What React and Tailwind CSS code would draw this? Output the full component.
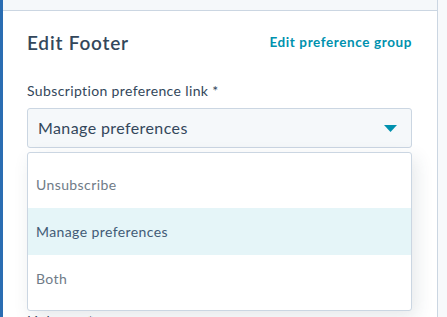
import React from "react";

const options = ["Unsubscribe", "Manage preferences", "Both"];

export default function App() {
    const selected = "Manage preferences";

    return (
        <div className="w-[447px] h-[317px] flex bg-white overflow-hidden font-['Lato',sans-serif]">
            <div className="w-[3px] shrink-0 bg-[#2a6db2]" />

            <div className="w-[435px] shrink-0 flex flex-col border-r border-[#cbd6e2]">
                <div className="h-[11px] shrink-0 bg-[#f5f8fa] border-b border-[#cbd6e2]" />

                <div className="pl-[24px] pr-[25px] pt-[20px]">
                    <div className="flex items-center justify-between h-[24px]">
                        <div className="text-[19px] font-semibold text-[#33475b] tracking-[0.8px]">Edit Footer</div>
                        <div className="text-[13.5px] font-bold text-[#0091ae] tracking-[0.6px] -mt-[1px]">Edit preference group</div>
                    </div>

                    <div className="relative mt-[26px]">
                        <div className="text-[14px] leading-[20px] text-[#33475b] tracking-[0.37px]">Subscription preference link *</div>

                        <div className="mt-[7px] h-[40px] flex items-center justify-between pl-[10px] pr-[14px] bg-[#f5f8fa] border border-[#cbd6e2] rounded-[3px]">
                            <span className="text-[16px] text-[#33475b] tracking-[0.4px]">{selected}</span>
                            <svg width="13" height="7" viewBox="0 0 13 7">
                                <polygon points="0,0 13,0 6.5,7" fill="#0091ae" />
                            </svg>
                        </div>

                        <div className="mt-[163px] text-[14px] leading-[20px] text-[#33475b] tracking-[0.37px]">Link text *</div>

                        <div className="absolute left-0 top-[71px] w-[385px] bg-white border border-[#cbd6e2] rounded-[3px] py-[8px] shadow-[4px_6px_18px_rgba(45,62,80,0.12)]">
                            {options.map((opt) => (
                                <div
                                    key={opt}
                                    className={
                                        "h-[47px] flex items-center pl-[8px] text-[14px] tracking-[0.4px] " +
                                        (opt === selected ? "bg-[#e5f5f8] text-[#425b76]" : "text-[#6f7b87]")
                                    }
                                >
                                    {opt}
                                </div>
                            ))}
                        </div>
                    </div>
                </div>
            </div>

            <div className="flex-1 bg-[#f7f9fb]" />
        </div>
    );
}
